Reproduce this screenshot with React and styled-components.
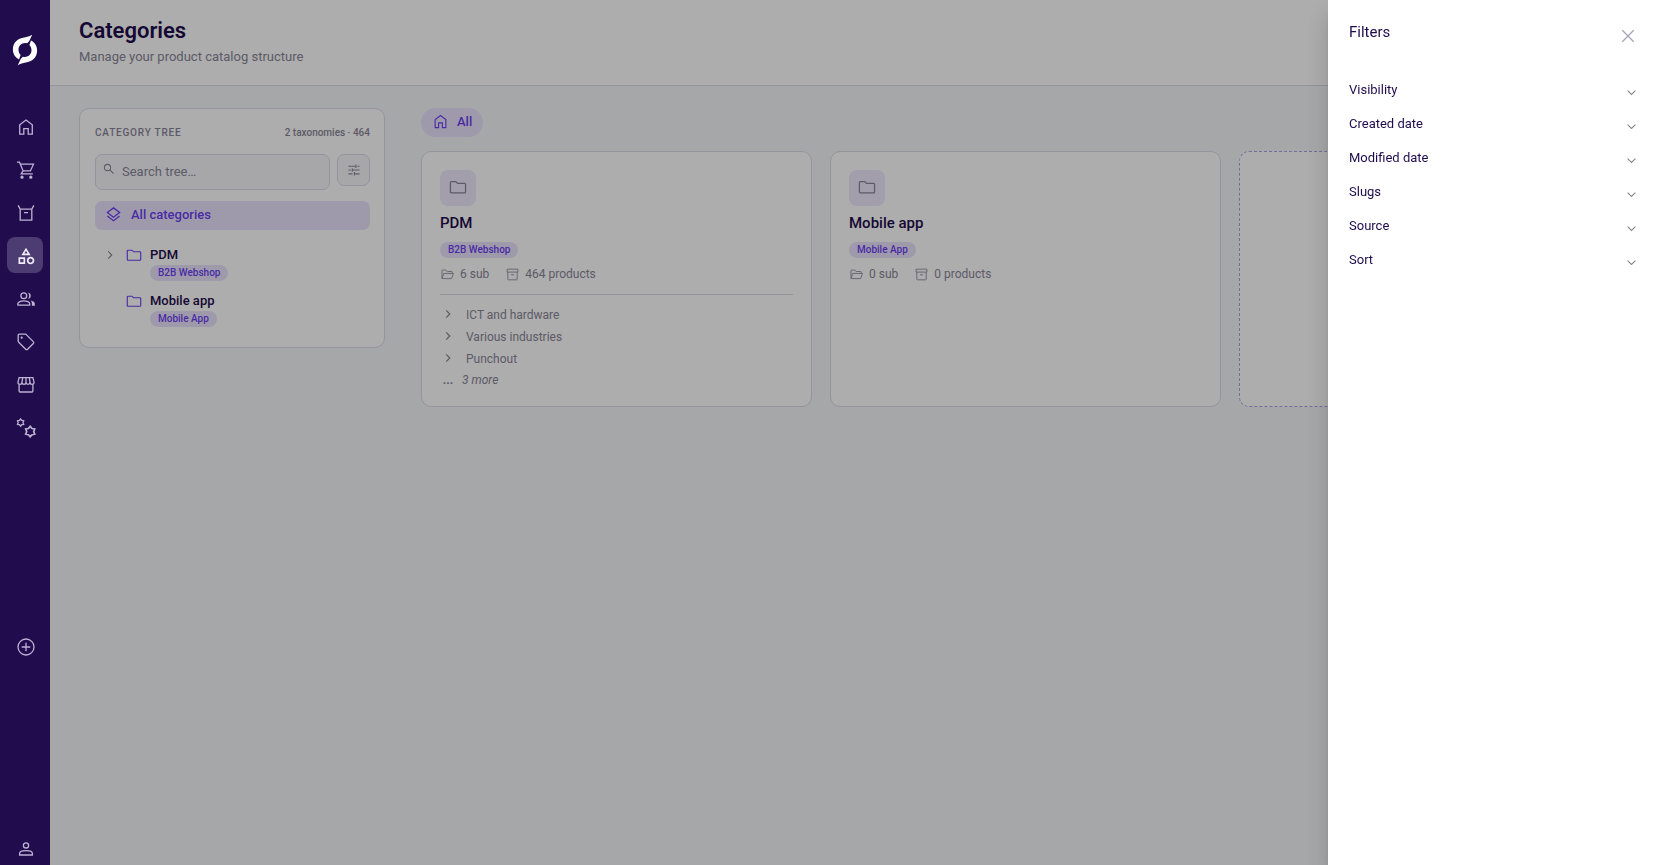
import React from "react";
import styled, { createGlobalStyle } from "styled-components";
import { MdOutlineCategory } from "react-icons/md";

const color = {
  ink: "#1f0c4d",
  muted: "#8a8699",
  soft: "#a7a3b8",
  accent: "#6c3ff2",
  tint: "#ebe4fc",
  line: "#dcd9e8",
  page: "#f5f7fa",
  field: "#f6f7fa",
};

const GlobalStyle = createGlobalStyle`
  *, *::before, *::after { box-sizing: border-box; }
  body {
    margin: 0;
    background: ${color.page};
    color: ${color.ink};
    font-family: Roboto, "Liberation Sans", sans-serif;
    font-size: 13px;
    line-height: 20px;
  }
  button, input { font: inherit; color: inherit; letter-spacing: inherit; }
  button { border: 0; padding: 0; background: none; cursor: pointer; }
  h1, h2, h3, p, ul { margin: 0; padding: 0; }
  ul { list-style: none; }
  a { color: inherit; text-decoration: none; }
`;

/* ---------- icons ---------- */

const Svg = styled.svg`
  display: block;
  flex: none;
  fill: none;
  stroke: currentColor;
  stroke-width: ${(p) => p.$weight || 1.3};
`;

function Icon({ size = 20, weight, children }) {
  return (
    <Svg width={size} height={size} viewBox="0 0 20 20" $weight={weight} aria-hidden="true">
      {children}
    </Svg>
  );
}

const HomeIcon = (p) => (
  <Icon {...p}>
    <path d="M3.7 17.2V7.8L10 3l6.3 4.8v9.4h-4.1v-5.6H7.8v5.6z" />
  </Icon>
);
const CartIcon = (p) => (
  <Icon {...p}>
    <path d="M1 2.2h2.5l3.6 8.7h7.3l3.1-6.7H4.4M7.1 10.9l-1.9 2.9h11.6" />
    <circle cx="6" cy="17.2" r="1" fill="currentColor" />
    <circle cx="14.8" cy="17.2" r="1" fill="currentColor" />
  </Icon>
);
const CrateIcon = (p) => (
  <Icon {...p}>
    <path d="M2.2 2.4l2 3.8v10.9h11.6V6.2l2-3.8M4.2 6.2h11.6M8 9.7h4" />
  </Icon>
);
const PeopleIcon = (p) => (
  <Icon {...p}>
    <circle cx="7.8" cy="6.8" r="2.9" />
    <path d="M1.9 16.1v-1.5c0-1.5 3-2.8 5.9-2.8s5.9 1.3 5.9 2.8v1.5z" />
    <path
      d="M12 3.5a3.3 3.3 0 0 1 0 6.5c1.5-1.8 1.5-4.7 0-6.5zM14.5 11.5c2.3.4 4.3 1.4 4.3 3v2.2h-2.9v-2.2c0-1.200-.5-2.200-1.400-3z"
      fill="currentColor"
      stroke="none"
    />
  </Icon>
);
const TagIcon = (p) => (
  <Icon {...p}>
    <path d="M2.2 3.200a1 1 0 0 1 1-1h6.100a1.500 1.500 0 0 1 1 .4l7 7a1.300 1.300 0 0 1 0 1.900l-5.700 5.700a1.300 1.300 0 0 1-1.900 0l-7-7a1.500 1.500 0 0 1-.5-1.100z" />
    <circle cx="5.700" cy="5.700" r="1.100" fill="currentColor" stroke="none" />
  </Icon>
);
const StoreIcon = (p) => (
  <Icon {...p}>
    <path d="M3.100 9.500v6.600q0 .9.9.9h12q.9 0 .9-.9V9.500" />
    <path d="M3.100 2.700h13.800l1.100 4.500q.2 2-2 2.100-1.900 0-2-1.900-.2 1.900-2 1.900t-2-1.900q-.1 1.900-2 1.900t-2-1.900q-.1 1.900-2 1.900-2.200-.1-2-2.100zM6.700 2.700L6 7.400M10 2.700v4.700M13.300 2.700l.7 4.700" />
  </Icon>
);
const gear = (cx, cy, r) => {
  const pts = [];
  for (let i = 0; i < 12; i += 1) {
    const a = (Math.PI / 6) * i - Math.PI / 2;
    const k = i % 2 ? r * 0.68 : r;
    pts.push(`${(cx + k * Math.cos(a)).toFixed(1)} ${(cy + k * Math.sin(a)).toFixed(1)}`);
  }
  return `M${pts.join("L")}z`;
};
const GearsIcon = (p) => (
  <Icon {...p}>
    <path d={gear(4.6, 4.6, 3.6)} />
    <path d={gear(14.2, 13.6, 5.2)} strokeWidth="1.7" />
  </Icon>
);
const PlusCircleIcon = (p) => (
  <Icon {...p}>
    <circle cx="10" cy="10" r="8" />
    <path d="M10 5.700v8.600M5.700 10h8.600" />
  </Icon>
);
const PersonIcon = (p) => (
  <Icon {...p}>
    <circle cx="10" cy="6.400" r="2.600" />
    <path d="M3.600 16v-1.600c0-1.700 3.200-2.700 6.400-2.700s6.400 1 6.400 2.700V16z" />
  </Icon>
);
const SearchIcon = (p) => (
  <Icon {...p}>
    <circle cx="7.500" cy="7.500" r="5.200" />
    <path d="M11.400 11.400l6.200 6.200" />
  </Icon>
);
const TuneIcon = (p) => (
  <Icon {...p}>
    <path d="M2 4.500h10.500M15 4.500h3M12.800 2v5M2 10h3.500M7.800 10H18M7.500 7.500v5M2 15.500h6M10.500 15.500H18M10.500 13v5" />
  </Icon>
);
const LayersIcon = (p) => (
  <Icon {...p}>
    <path d="M10 2.200l7.200 5.500L10 13.200 2.800 7.700zM2.800 11.900l7.200 5.500 7.200-5.500" />
  </Icon>
);
const FolderIcon = (p) => (
  <Icon {...p}>
    <path d="M1.600 15.500V5q0-1 1-1h4.900l2 2h7.900q1 0 1 1v8.500q0 1-1 1H2.600q-1 0-1-1z" />
  </Icon>
);
const FolderOpenIcon = (p) => (
  <Icon {...p}>
    <path d="M1.500 16.300V4q0-.8.8-.8h5l2.200 2.200h7q.8 0 .8.800v2.200M1.500 16.300l2.700-7.900h14.900l-2.400 7.100q-.3.800-1.100.8H2" />
  </Icon>
);
const ArchiveIcon = (p) => (
  <Icon {...p}>
    <path d="M1.700 1.800h16.600v4.500H1.700zM2.800 6.300v11q0 .9.900.9h12.600q.9 0 .9-.9v-11M7.700 10.500h4.600" />
  </Icon>
);
const ChevronRight = (p) => (
  <Icon {...p}>
    <path d="M7 4l6 6-6 6" />
  </Icon>
);
const ChevronDown = (p) => (
  <Icon {...p}>
    <path d="M4 7l6 6 6-6" />
  </Icon>
);
const CloseIcon = (p) => (
  <Icon {...p}>
    <path d="M4.300 4.300l11.400 11.400M15.700 4.300L4.300 15.700" />
  </Icon>
);
const Logo = () => (
  <svg width="26" height="32" viewBox="0 0 26 32" fill="#fff" aria-hidden="true">
    <path d="M20.200 .8L17.300 6.900L15.200 9.300C9.800 8.200 6.400 11.800 6.500 16C6.600 18.300 7.500 19.900 8.600 21L7 25.400C3.200 23.400 .9 20 .9 15.500C.9 8.500 5.800 4.400 12.300 3.500C15 3.100 17.800 2.300 20.200 .8Z" />
    <path d="M5.800 31.200L8.700 25.100L10.800 22.700C16.200 23.800 19.600 20.200 19.500 16C19.400 13.700 18.500 12.100 17.400 11L19 6.600C22.800 8.600 25.100 12 25.100 16.500C25.100 23.500 20.200 27.600 13.700 28.500C11 28.900 8.200 29.700 5.800 31.200Z" />
  </svg>
);

/* ---------- shell ---------- */

const Shell = styled.div`
  display: flex;
  min-height: 100vh;
`;

const Sidebar = styled.aside`
  flex: none;
  width: 50px;
  display: flex;
  flex-direction: column;
  align-items: center;
  padding-top: 34px;
  background: #210d4e;
  position: relative;
  z-index: 3;
`;

const LogoLink = styled.a`
  display: block;
  height: 32px;
  margin-bottom: 42px;
`;

const NavList = styled.nav`
  display: flex;
  flex-direction: column;
  gap: 7px;
`;

const NavItem = styled.a`
  display: flex;
  align-items: center;
  justify-content: center;
  width: 36px;
  height: 36px;
  padding: 2px 0 0 2px;
  border-radius: 8px;
  color: ${(p) => (p.$active ? "#f0ecfa" : "#bcb3d3")};
  background: ${(p) => (p.$active ? "#4d3c72" : "transparent")};
`;

const SidebarFoot = styled.div`
  margin-top: auto;
  display: flex;
  flex-direction: column;
  gap: 170px;
`;

const RoundButton = styled.button`
  display: flex;
  align-items: center;
  justify-content: center;
  width: 36px;
  height: 32px;
  padding-left: 2px;
  color: #bcb3d3;
`;

const Page = styled.div`
  flex: 1;
  min-width: 0;
`;

const Header = styled.header`
  padding: 17px 29px 18px;
  background: #fff;
  border-bottom: 1px solid ${color.line};
`;

const Title = styled.h1`
  font-size: 22px;
  line-height: 28px;
  font-weight: 600;
`;

const Subtitle = styled.p`
  padding-top: 1px;
  color: ${color.muted};
  font-size: 13px;
  line-height: 21px;
`;

const Content = styled.main`
  display: grid;
  grid-template-columns: 306px minmax(0, 1fr);
  align-items: start;
  gap: 36px;
  padding: 22px 29px;
`;

/* ---------- category tree ---------- */

const Panel = styled.section`
  background: #fff;
  border: 1px solid ${color.line};
  border-radius: 10px;
`;

const TreePanel = styled(Panel)`
  padding: 14px 14px 20px 15px;
`;

const TreeHead = styled.div`
  display: flex;
  justify-content: space-between;
  align-items: center;
  height: 20px;
  font-size: 10px;
  color: ${color.muted};
`;

const TreeTitle = styled.h2`
  font-size: 10px;
  font-weight: 500;
  letter-spacing: 0.08em;
  text-transform: uppercase;
`;

const TreeCount = styled.span`
  font-weight: 500;
`;

const SearchRow = styled.div`
  display: flex;
  align-items: flex-start;
  gap: 7px;
  margin: 11px 0;
`;

const SearchBox = styled.label`
  flex: 1;
  display: flex;
  align-items: flex-start;
  gap: 7px;
  height: 36px;
  padding: 8px 7px;
  border: 1px solid ${color.line};
  border-radius: 7px;
  background: ${color.field};
  color: ${color.muted};
`;

const SearchInput = styled.input`
  flex: 1;
  min-width: 0;
  height: 18px;
  padding: 0;
  border: 0;
  outline: 0;
  background: transparent;
  &::placeholder {
    color: ${color.muted};
    opacity: 1;
  }
`;

const FilterButton = styled.button`
  display: flex;
  align-items: center;
  justify-content: center;
  width: 33px;
  height: 32px;
  border: 1px solid ${color.line};
  border-radius: 7px;
  background: ${color.field};
  color: ${color.muted};
`;

const AllButton = styled.button`
  display: flex;
  align-items: center;
  gap: 9px;
  width: 100%;
  height: 29px;
  padding: 0 10px 2px;
  border-radius: 7px;
  background: ${color.tint};
  color: ${color.accent};
  font-weight: 500;
`;

const Tree = styled.ul`
  margin-top: 15px;
  display: flex;
  flex-direction: column;
  gap: 10px;
`;

const TreeRow = styled.li`
  display: grid;
  grid-template-columns: 12px 16px auto;
  justify-content: start;
  align-items: start;
  padding-left: 9px;
  column-gap: 10px;
  height: 36px;
`;

const TreeGlyph = styled.span`
  display: flex;
  align-items: center;
  height: 20px;
  color: ${(p) => (p.$accent ? color.accent : color.muted)};
`;

const TreeLabel = styled.div`
  display: flex;
  flex-direction: column;
  align-items: flex-start;
  margin-left: -2px;
  font-weight: 500;
`;

const Badge = styled.span`
  display: inline-block;
  padding: 0 8px;
  border-radius: 8px;
  background: ${color.tint};
  color: ${color.accent};
  font-size: 10px;
  line-height: 16px;
  font-weight: 500;
`;

/* ---------- category cards ---------- */

const Crumb = styled.a`
  display: inline-flex;
  align-items: center;
  gap: 8px;
  height: 29px;
  padding: 0 11px 2px;
  border-radius: 15px;
  background: ${color.tint};
  color: ${color.accent};
  font-weight: 500;
`;

const Crumbs = styled.nav`
  display: flex;
  margin-bottom: 14px;
`;

const CardGrid = styled.div`
  display: grid;
  grid-template-columns: repeat(3, minmax(0, 1fr));
  gap: 18px;
`;

const Card = styled(Panel)`
  padding: 18px 18px 16px;
`;

const NewCard = styled.button`
  border: 1px dashed #aca0e8;
  border-radius: 10px;
  background: #fff;
`;

const IconTile = styled.div`
  display: flex;
  align-items: center;
  justify-content: center;
  width: 36px;
  height: 36px;
  padding-bottom: 2px;
  border-radius: 8px;
  background: #efe9fc;
  color: ${color.muted};
`;

const CardTitle = styled.h3`
  margin: 7px 0 9px;
  font-size: 15px;
  line-height: 20px;
  font-weight: 500;
`;

const Meta = styled.div`
  display: flex;
  gap: 16px;
  padding-top: 2px;
  color: ${color.muted};
  font-size: 12px;
`;

const MetaItem = styled.span`
  display: flex;
  align-items: center;
  gap: 6px;
  padding-left: 1px;
`;

const BadgeRow = styled.div`
  display: flex;
  margin-bottom: 4px;
`;

const Children = styled.ul`
  margin-top: 10px;
  padding-top: 9px;
  border-top: 1px solid ${color.line};
  color: ${color.muted};
  font-size: 12px;
`;

const Child = styled.li`
  display: flex;
  align-items: center;
  height: 22px;
  gap: 12px;
  padding-left: 2px;
`;

const ChildGlyph = styled.span`
  width: 12px;
  padding-bottom: 3px;
`;

const More = styled(Child)`
  height: 20px;
  gap: 8px;
  font-style: italic;
`;

const Dots = styled.span`
  width: 12px;
  text-align: center;
  font-style: normal;
  font-weight: 700;
`;

/* ---------- drawer ---------- */

const Backdrop = styled.div`
  position: fixed;
  inset: 0;
  z-index: 2;
  background: rgba(0, 0, 0, 0.32);
`;

const Drawer = styled.aside`
  position: fixed;
  inset: 0 0 0 auto;
  z-index: 4;
  width: 331px;
  padding: 22px 21px;
  background: #fff;
  box-shadow: 0 8px 10px -5px rgba(0, 0, 0, 0.2), 0 16px 24px 2px rgba(0, 0, 0, 0.14);
`;

const DrawerHead = styled.div`
  display: flex;
  justify-content: space-between;
  height: 51px;
`;

const DrawerTitle = styled.h2`
  font-size: 15px;
  line-height: 20px;
  font-weight: 400;
`;

const CloseButton = styled.button`
  display: flex;
  height: 20px;
  margin-top: 4px;
  color: ${color.soft};
`;

const FilterRow = styled.button`
  display: flex;
  align-items: center;
  justify-content: space-between;
  width: 100%;
  height: 34px;
`;

const FilterGlyph = styled.span`
  padding-top: 4px;
  color: #888;
`;

const nav = [
  ["Home", HomeIcon],
  ["Orders", CartIcon],
  ["Products", CrateIcon],
  ["Categories", MdOutlineCategory],
  ["Customers", PeopleIcon],
  ["Promotions", TagIcon],
  ["Stores", StoreIcon],
  ["Settings", GearsIcon],
];

const filters = ["Visibility", "Created date", "Modified date", "Slugs", "Source", "Sort"];

const categories = [
  {
    name: "PDM",
    channel: "B2B Webshop",
    sub: 6,
    products: 464,
    children: ["ICT and hardware", "Various industries", "Punchout"],
    more: 3,
  },
  { name: "Mobile app", channel: "Mobile App", sub: 0, products: 0, children: [], more: 0 },
];

function CategoryCard({ item }) {
  return (
    <Card>
      <IconTile>
        <FolderIcon size={18} weight={1.4} />
      </IconTile>
      <CardTitle>{item.name}</CardTitle>
      <BadgeRow>
        <Badge>{item.channel}</Badge>
      </BadgeRow>
      <Meta>
        <MetaItem>
          <FolderOpenIcon size={13} />
          {item.sub} sub
        </MetaItem>
        <MetaItem>
          <ArchiveIcon size={13} />
          {item.products} products
        </MetaItem>
      </Meta>
      {item.children.length > 0 && (
        <Children>
          {item.children.map((child) => (
            <Child key={child}>
              <ChildGlyph>
                <ChevronRight size={12} weight={2} />
              </ChildGlyph>
              {child}
            </Child>
          ))}
          <More>
            <Dots>...</Dots>
            {item.more} more
          </More>
        </Children>
      )}
    </Card>
  );
}

export default function App() {
  return (
    <>
      <GlobalStyle />
      <Shell>
        <Sidebar>
          <LogoLink href="#" aria-label="Dashboard">
            <Logo />
          </LogoLink>
          <NavList>
            {nav.map(([label, Glyph]) => (
              <NavItem key={label} href="#" aria-label={label} $active={label === "Categories"}>
                <Glyph size={20} />
              </NavItem>
            ))}
          </NavList>
          <SidebarFoot>
            <RoundButton aria-label="Add">
              <PlusCircleIcon />
            </RoundButton>
            <RoundButton aria-label="Account">
              <PersonIcon />
            </RoundButton>
          </SidebarFoot>
        </Sidebar>
        <Page>
          <Header>
            <Title>Categories</Title>
            <Subtitle>Manage your product catalog structure</Subtitle>
          </Header>
          <Content>
            <TreePanel>
              <TreeHead>
                <TreeTitle>Category tree</TreeTitle>
                <TreeCount>2 taxonomies · 464</TreeCount>
              </TreeHead>
              <SearchRow>
                <SearchBox>
                  <SearchIcon size={12} weight={1.7} />
                  <SearchInput aria-label="Search tree" placeholder="Search tree…" />
                </SearchBox>
                <FilterButton aria-label="Filters">
                  <TuneIcon size={14} weight={1.5} />
                </FilterButton>
              </SearchRow>
              <AllButton>
                <LayersIcon size={17} weight={1.5} />
                All categories
              </AllButton>
              <Tree>
                {categories.map((item) => (
                  <TreeRow key={item.name}>
                    <TreeGlyph>{item.children.length > 0 && <ChevronRight size={12} weight={1.8} />}</TreeGlyph>
                    <TreeGlyph $accent>
                      <FolderIcon size={16} weight={1.4} />
                    </TreeGlyph>
                    <TreeLabel>
                      {item.name}
                      <Badge>{item.channel}</Badge>
                    </TreeLabel>
                  </TreeRow>
                ))}
              </Tree>
            </TreePanel>
            <div>
              <Crumbs>
                <Crumb href="#">
                  <HomeIcon size={17} />
                  All
                </Crumb>
              </Crumbs>
              <CardGrid>
                {categories.map((item) => (
                  <CategoryCard key={item.name} item={item} />
                ))}
                <NewCard aria-label="New category" />
              </CardGrid>
            </div>
          </Content>
        </Page>
      </Shell>
      <Backdrop />
      <Drawer>
        <DrawerHead>
          <DrawerTitle>Filters</DrawerTitle>
          <CloseButton aria-label="Close">
            <CloseIcon />
          </CloseButton>
        </DrawerHead>
        {filters.map((label) => (
          <FilterRow key={label}>
            {label}
            <FilterGlyph>
              <ChevronDown size={13} weight={1.7} />
            </FilterGlyph>
          </FilterRow>
        ))}
      </Drawer>
    </>
  );
}
